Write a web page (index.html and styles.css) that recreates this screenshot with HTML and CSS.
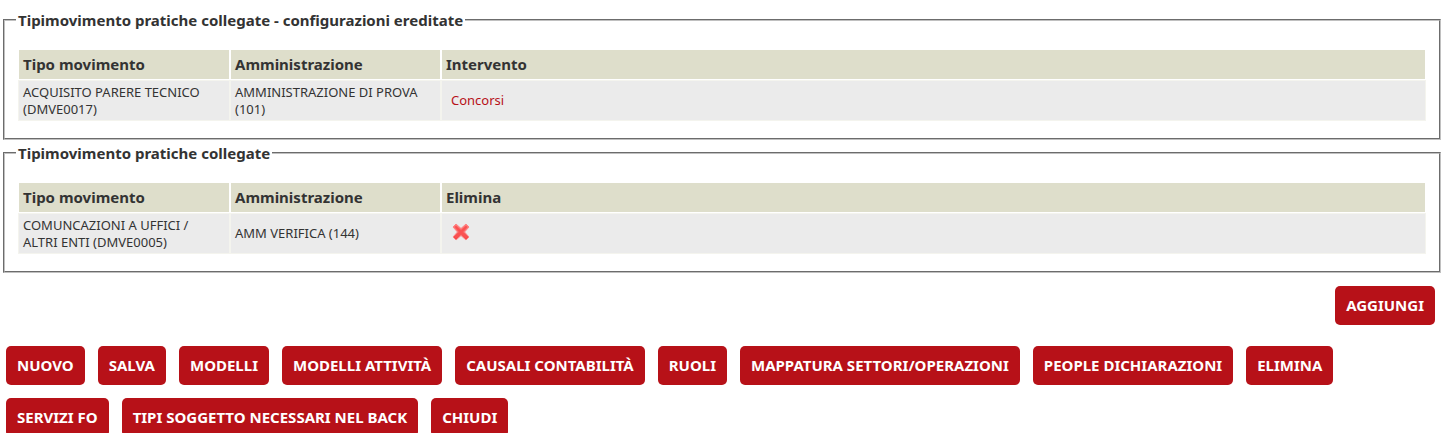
FILE: index.html
```html
<!DOCTYPE html>
<html lang="it">
<head>
<meta charset="utf-8">
<title>Tipimovimento pratiche collegate</title>
<link rel="stylesheet" href="styles.css">
</head>
<body>
<form class="page">
  <fieldset class="group">
    <legend class="group-title">Tipimovimento pratiche collegate - configurazioni ereditate</legend>
    <table class="grid">
      <thead>
        <tr><th class="col-type" scope="col">Tipo movimento</th><th class="col-admin" scope="col">Amministrazione</th><th scope="col">Intervento</th></tr>
      </thead>
      <tbody>
        <tr><td>ACQUISITO PARERE TECNICO (DMVE0017)</td><td>AMMINISTRAZIONE DI PROVA (101)</td><td><a class="link" href="#">Concorsi</a></td></tr>
      </tbody>
    </table>
  </fieldset>
  <fieldset class="group">
    <legend class="group-title">Tipimovimento pratiche collegate</legend>
    <table class="grid">
      <thead>
        <tr><th class="col-type" scope="col">Tipo movimento</th><th class="col-admin" scope="col">Amministrazione</th><th scope="col">Elimina</th></tr>
      </thead>
      <tbody>
        <tr><td>COMUNCAZIONI A UFFICI / ALTRI ENTI (DMVE0005)</td><td>AMM VERIFICA (144)</td><td><button class="delete" type="button" aria-label="Elimina"><svg class="delete-icon" viewBox="0 0 18 18" aria-hidden="true"><defs><linearGradient id="red" x1="0" y1="0" x2="0" y2="1"><stop offset="0" stop-color="#ff8080"/><stop offset="1" stop-color="#f04444"/></linearGradient></defs><path d="M4 1 1 4 5.500 9 1 14 4 17 9 12.500 14 17 17 14 12.500 9 17 4 14 1 9 5.500Z" fill="url(#red)" stroke="#ff8585" stroke-width="1" stroke-linejoin="round"/><path d="M4 4 14 14M14 4 4 14" stroke="#fb5050" stroke-width="2" stroke-linecap="round"/></svg></button></td></tr>
      </tbody>
    </table>
  </fieldset>
  <div class="add-bar"><button class="btn" type="button">AGGIUNGI</button></div>
  <div class="actions">
    <button class="btn" type="button">NUOVO</button>
    <button class="btn" type="button">SALVA</button>
    <button class="btn" type="button">MODELLI</button>
    <button class="btn" type="button">MODELLI ATTIVITÀ</button>
    <button class="btn" type="button">CAUSALI CONTABILITÀ</button>
    <button class="btn" type="button">RUOLI</button>
    <button class="btn" type="button">MAPPATURA SETTORI/OPERAZIONI</button>
    <button class="btn" type="button">PEOPLE DICHIARAZIONI</button>
    <button class="btn" type="button">ELIMINA</button>
    <button class="btn" type="button">SERVIZI FO</button>
    <button class="btn" type="button">TIPI SOGGETTO NECESSARI NEL BACK</button>
    <button class="btn" type="button">CHIUDI</button>
  </div>
</form>
</body>
</html>
```
FILE: styles.css
```css
* { box-sizing: border-box; }
html { overflow: hidden auto; scrollbar-width: none; }
body {
  margin: 0;
  background: #fff;
  color: #333;
  font: 13px/17px Tahoma, "Noto Sans", sans-serif;
}
.page { padding: 10px 4px 0 3px; }
.group {
  margin: 0 0 3px;
  padding: 19px 13px 17px;
  min-width: 0;
  border: 2px groove #c0c0c0;
}
.group-title {
  margin-left: -2px;
  padding: 0 2px;
  font-size: 15px;
  line-height: 20px;
  font-weight: bold;
}
.grid {
  width: 100%;
  border-spacing: 0;
  table-layout: fixed;
}
.grid th {
  padding: 5px 4px;
  border: 1px solid #fff;
  background: #dedecb;
  font-size: 15px;
  line-height: 19px;
  text-align: left;
}
.grid td {
  height: 41px;
  padding: 2px 4px;
  border: 1px solid #f4f4ee;
  background: #ebebeb;
}
.col-type { width: 212px; }
.col-admin { width: 211px; }
.link { margin-left: 5px; color: #b71118; text-decoration: none; }
.delete {
  display: block;
  margin-left: 6px;
  padding: 0 0 3px;
  border: 0;
  background: none;
}
.delete-icon { display: block; width: 18px; height: 18px; }
.add-bar { display: flex; justify-content: flex-end; padding: 10px 6px 0; }
.actions { display: flex; flex-wrap: wrap; gap: 13px; padding: 21px 3px 0; }
.btn {
  height: 39px;
  padding: 0 11px;
  border: 0;
  border-radius: 5px;
  background: #b71118;
  color: #fff;
  font: bold 15px/19px Tahoma, "Noto Sans", sans-serif;
  white-space: nowrap;
}
```
